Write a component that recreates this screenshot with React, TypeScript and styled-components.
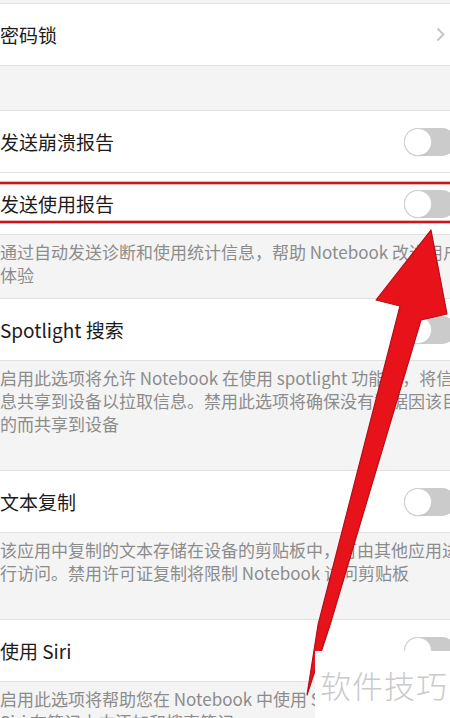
import React from "react";
import styled, { createGlobalStyle } from "styled-components";

const Global = createGlobalStyle`
  html, body { margin: 0; padding: 0; background: #f4f4f4; overflow: hidden; }
  #root { width: 450px; height: 718px; }
`;

const Screen = styled.div`
  position: relative;
  width: 450px;
  height: 718px;
  overflow: hidden;
  background: #f4f4f4;
  font-family: "Noto Sans CJK SC", "Noto Sans", sans-serif;
`;

const Page = styled.div`
  width: 460px;
  display: flex;
  flex-direction: column;
`;

const Gap = styled.div<{ $h: number }>`
  height: ${(p) => p.$h}px;
  box-sizing: border-box;
  background: #f4f4f4;
  border-bottom: 1px solid #e1e1e1;
`;

const Row = styled.div`
  position: relative;
  height: 62px;
  box-sizing: border-box;
  background: #fff;
  border-bottom: 1px solid #e1e1e1;
  display: flex;
  align-items: center;
  justify-content: space-between;
`;

const Label = styled.span`
  font-size: 19px;
  color: #1c1c1c;
  line-height: 1;
`;

const Desc = styled.div<{ $h: number }>`
  height: ${(p) => p.$h}px;
  box-sizing: border-box;
  padding-top: 5px;
  font-size: 17px;
  line-height: 23px;
  color: #8c8c8c;
  background: #f4f4f4;
  border-bottom: 1px solid #e1e1e1;
  overflow: hidden;
`;

const Track = styled.div`
  width: 52px;
  height: 28px;
  border-radius: 14px;
  background: #cbcbcb;
  margin-right: 4px;
  display: flex;
  align-items: center;
  flex-shrink: 0;
`;

const Knob = styled.div`
  width: 26px;
  height: 26px;
  margin-left: 1px;
  border-radius: 50%;
  background: #fff;
  box-shadow: 0 0 0 1px #d2d2d2, 0 1px 2px rgba(0, 0, 0, 0.15);
`;

const Chevron = styled.svg`
  width: 9px;
  height: 15px;
  margin-right: 15px;
`;

const Highlight = styled.div`
  position: absolute;
  left: -4px;
  right: -4px;
  top: 9px;
  height: 41px;
  box-sizing: border-box;
  border: 2px solid #c9161e;
  box-shadow: inset 0 0 0 1px #efb3b3, 0 0 0 1px rgba(200, 40, 40, 0.35);
  pointer-events: none;
`;

const ArrowLayer = styled.svg`
  position: absolute;
  left: 0;
  top: 0;
  width: 450px;
  height: 718px;
  pointer-events: none;
  z-index: 2;
`;

const Watermark = styled.div`
  position: absolute;
  left: 315px;
  top: 651px;
  width: 140px;
  height: 67px;
  background: #fff;
  z-index: 3;
  display: flex;
  align-items: center;
  padding-left: 5px;
  box-sizing: border-box;
  font-size: 31px;
  letter-spacing: 1px;
  color: #cacaca;
  font-weight: 300;
`;

const Toggle = () => (
  <Track>
    <Knob />
  </Track>
);

export default function App() {
  return (
    <>
      <Global />
      <Screen>
        <Page>
          <Gap $h={4} />
          <Row>
            <Label>密码锁</Label>
            <Chevron viewBox="0 0 9 15">
              <path d="M1.5 1.5 L7.5 7.5 L1.5 13.5" fill="none" stroke="#c4c4c8" strokeWidth="1.8" />
            </Chevron>
          </Row>
          <Gap $h={45} />
          <Row>
            <Label>发送崩溃报告</Label>
            <Toggle />
          </Row>
          <Row>
            <Label>发送使用报告</Label>
            <Toggle />
            <Highlight />
          </Row>
          <Desc $h={64}>通过自动发送诊断和使用统计信息，帮助 Notebook 改进用户体验</Desc>
          <Row>
            <Label>Spotlight 搜索</Label>
            <Toggle />
          </Row>
          <Desc $h={110}>
            启用此选项将允许 Notebook 在使用 spotlight 功能时，将信息共享到设备以拉取信息。禁用此选项将确保没有数据因该目的而共享到设备
          </Desc>
          <Row>
            <Label>文本复制</Label>
            <Toggle />
          </Row>
          <Desc $h={87}>
            该应用中复制的文本存储在设备的剪贴板中，可由其他应用进行访问。禁用许可证复制将限制 Notebook 访问剪贴板
          </Desc>
          <Row>
            <Label>使用 Siri</Label>
            <Toggle />
          </Row>
          <Desc $h={80}>
            启用此选项将帮助您在 Notebook 中使用 Siri 快捷指令，通过 Siri 在笔记本中添加和搜索笔记
          </Desc>
        </Page>
        <ArrowLayer viewBox="0 0 450 718">
          <polygon
            points="431,230 447,314 421,320 330,625 307,695 318,625 400,306 376,300"
            fill="#e8121a"
            stroke="#b3101a"
            strokeWidth="1.2"
            strokeLinejoin="round"
          />
        </ArrowLayer>
        <Watermark>软件技巧</Watermark>
      </Screen>
    </>
  );
}
